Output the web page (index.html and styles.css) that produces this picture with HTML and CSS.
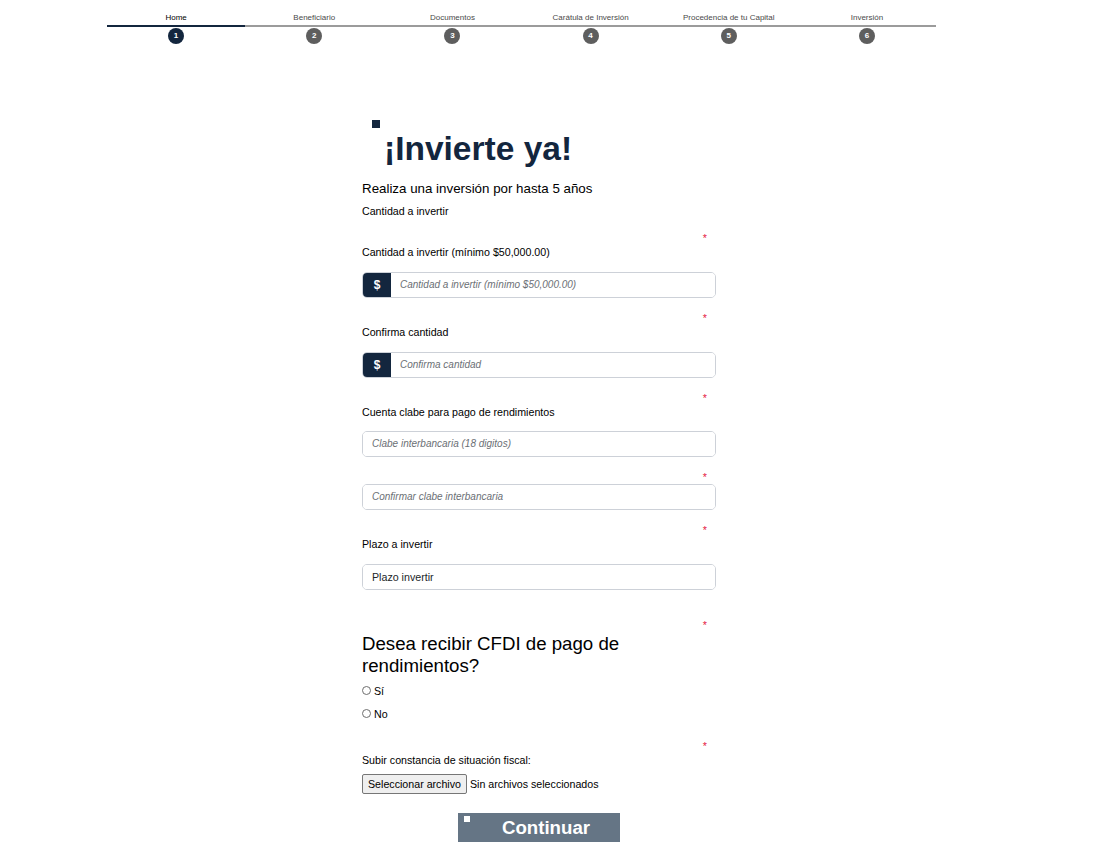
FILE: index.html
```html
<!DOCTYPE html>
<html lang="es">
<head>
<meta charset="utf-8">
<title>¡Invierte ya!</title>
<link rel="stylesheet" href="styles.css">
</head>
<body>
<nav class="stepper">
  <div class="step step-active"><div class="step-label">Home</div><div class="step-bar"></div><div class="step-num">1</div></div>
  <div class="step"><div class="step-label">Beneficiario</div><div class="step-bar"></div><div class="step-num">2</div></div>
  <div class="step"><div class="step-label">Documentos</div><div class="step-bar"></div><div class="step-num">3</div></div>
  <div class="step"><div class="step-label">Carátula de Inversión</div><div class="step-bar"></div><div class="step-num">4</div></div>
  <div class="step"><div class="step-label">Procedencia de tu Capital</div><div class="step-bar"></div><div class="step-num">5</div></div>
  <div class="step"><div class="step-label">Inversión</div><div class="step-bar"></div><div class="step-num">6</div></div>
</nav>

<main class="form">
  <div class="title-mark"></div>
  <h1 class="title">¡Invierte ya!</h1>
  <p class="subtitle">Realiza una inversión por hasta 5 años</p>
  <p class="label section-label">Cantidad a invertir</p>

  <div class="req req-first">*</div>
  <label class="label">Cantidad a invertir (mínimo $50,000.00)</label>
  <div class="field field-group">
    <span class="prefix">$</span>
    <input class="control" type="text" placeholder="Cantidad a invertir (mínimo $50,000.00)">
  </div>

  <div class="req">*</div>
  <label class="label">Confirma cantidad</label>
  <div class="field field-group">
    <span class="prefix">$</span>
    <input class="control" type="text" placeholder="Confirma cantidad">
  </div>

  <div class="req">*</div>
  <label class="label">Cuenta clabe para pago de rendimientos</label>
  <div class="field field-tight">
    <input class="control" type="text" placeholder="Clabe interbancaria (18 digitos)">
  </div>

  <div class="req">*</div>
  <div class="field field-nolabel">
    <input class="control" type="text" placeholder="Confirmar clabe interbancaria">
  </div>

  <div class="req">*</div>
  <label class="label">Plazo a invertir</label>
  <div class="field">
    <div class="control control-value">Plazo invertir</div>
  </div>

  <div class="req req-far">*</div>
  <h2 class="question">Desea recibir CFDI de pago de rendimientos?</h2>
  <div class="radios">
    <div class="radio"><span class="radio-dot"></span><span>Sí</span></div>
    <div class="radio"><span class="radio-dot"></span><span>No</span></div>
  </div>

  <div class="req req-upload">*</div>
  <label class="label">Subir constancia de situación fiscal:</label>
  <div class="file-row">
    <span class="file-btn">Seleccionar archivo</span>
    <span class="file-name">Sin archivos seleccionados</span>
  </div>

  <div class="actions">
    <button class="continue" type="button"><span class="continue-mark"></span>Continuar</button>
  </div>
</main>
</body>
</html>
```

FILE: styles.css
```css
* { box-sizing: border-box; }

body {
  margin: 0;
  background: #fff;
  font-family: "Liberation Sans", Arial, sans-serif;
  color: #000;
}

/* ---------- stepper ---------- */
.stepper {
  display: flex;
  width: 829px;
  margin-left: 107px;
  padding-top: 13px;
}
.step {
  flex: 1;
  display: flex;
  flex-direction: column;
  align-items: center;
}
.step-label {
  font-size: 8px;
  line-height: 10px;
  height: 10px;
  color: #4a4a4a;
  white-space: nowrap;
}
.step-active .step-label { color: #000; }
.step-bar {
  align-self: stretch;
  height: 2px;
  margin-top: 2px;
  background: #9b9b9b;
}
.step-active .step-bar { background: #13263e; }
.step-num {
  width: 16px;
  height: 16px;
  margin-top: 1px;
  border-radius: 50%;
  background: #5e5e5e;
  color: #fff;
  font-size: 8px;
  font-weight: bold;
  line-height: 16px;
  text-align: center;
}
.step-active .step-num { background: #13263e; }

/* ---------- form ---------- */
.form {
  width: 354px;
  margin-left: 362px;
  padding-top: 76px;
  padding-bottom: 16px;
}
.title-mark {
  width: 8px;
  height: 8px;
  margin-left: 10px;
  background: #13263e;
}
.title {
  margin: 2px 0 0;
  padding-left: 22px;
  font-size: 33.5px;
  line-height: 38px;
  font-weight: bold;
  color: #13263e;
}
.subtitle {
  margin: 13px 0 0;
  font-size: 13.33px;
  line-height: 16px;
}
.label {
  display: block;
  margin: 1px 0 0;
  font-size: 10.67px;
  line-height: 13px;
}
.section-label { margin-top: 8px; }

.req {
  margin-top: 14px;
  padding-right: 9px;
  text-align: right;
  color: #e5173f;
  font-size: 10.67px;
  line-height: 13px;
  height: 13px;
}
.req-first { margin-top: 14px; }
.req-far { margin-top: 29px; }
.req-upload { margin-top: 15px; }

.field {
  display: flex;
  height: 26px;
  margin-top: 13px;
  border: 1px solid #cdd1d8;
  border-radius: 5px;
  overflow: hidden;
}
.field-tight { margin-top: 12px; }
.field-nolabel { margin-top: 0; }
.prefix {
  width: 28px;
  flex: none;
  background: #13263e;
  color: #fff;
  font-weight: bold;
  font-size: 12px;
  line-height: 24px;
  text-align: center;
}
.control {
  flex: 1;
  min-width: 0;
  border: 0;
  outline: 0;
  padding: 0 9px;
  font-family: "Liberation Sans", Arial, sans-serif;
  font-size: 10px;
  line-height: 24px;
  color: #212529;
  background: #fff;
}
.control::placeholder {
  color: #6b6f75;
  font-style: italic;
}
.control-value {
  font-size: 10.67px;
}

.question {
  margin: 1px 0 0;
  font-size: 18.67px;
  line-height: 21.5px;
  font-weight: normal;
}
.radios { margin-top: 3px; }
.radio {
  display: flex;
  align-items: center;
  height: 23px;
  font-size: 10.67px;
  gap: 3px;
}
.radio-dot {
  width: 9px;
  height: 9px;
  border: 1px solid #6f6f6f;
  border-radius: 50%;
}

.file-row {
  display: flex;
  align-items: center;
  margin-top: 7px;
  height: 20px;
  font-size: 10.67px;
}
.file-btn {
  display: flex;
  align-items: center;
  height: 20px;
  padding: 0 5px;
  border: 1px solid #767676;
  border-radius: 2px;
  background: #efefef;
  color: #000;
}
.file-name { margin-left: 3px; }

.actions {
  display: flex;
  justify-content: center;
  margin-top: 19px;
}
.continue {
  position: relative;
  width: 162px;
  height: 29px;
  padding: 0 0 0 14px;
  border: 0;
  background: #657585;
  color: #fff;
  font-family: "Liberation Sans", Arial, sans-serif;
  font-weight: bold;
  font-size: 18.67px;
  line-height: 29px;
  text-align: center;
}
.continue-mark {
  position: absolute;
  left: 6px;
  top: 3px;
  width: 6px;
  height: 6px;
  background: #fff;
}
```
